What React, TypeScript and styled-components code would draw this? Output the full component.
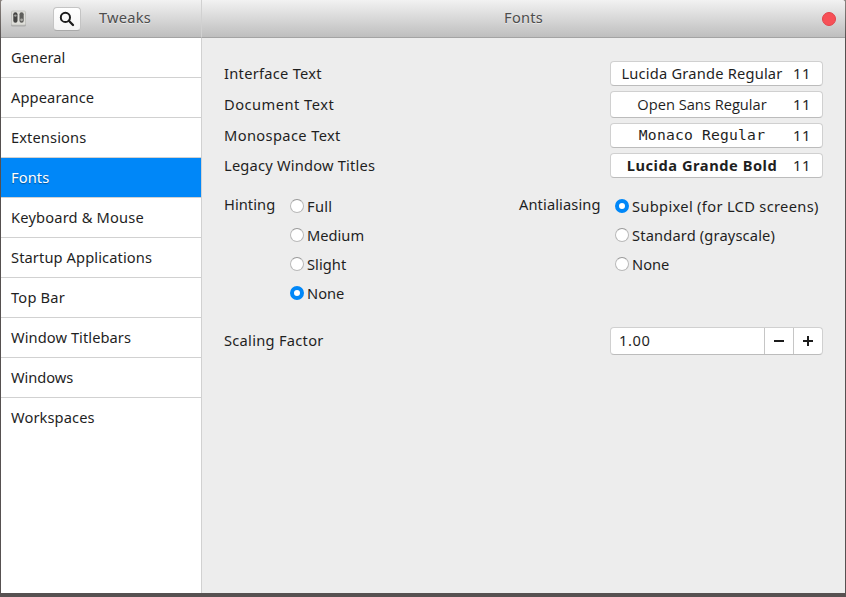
import React from "react";
import styled, { createGlobalStyle } from "styled-components";

const GlobalStyle = createGlobalStyle`
  * { box-sizing: border-box; }
  html, body { margin: 0; height: 100%; overflow: hidden; }
  body { background: #575151; font-family: "Noto Sans", sans-serif; font-size: 14.67px; color: #1f1f1f; }
`;

const Desktop = styled.div`
  width: 846px;
  height: 597px;
  padding: 0 1px 4px 1px;
  background: linear-gradient(#8b8480 0, #55504f 40px, #575151 100%);
`;

const Window = styled.div`
  display: grid;
  grid-template-columns: 201px 1fr;
  grid-template-rows: 38px 1fr;
  height: 593px;
  overflow: hidden;
  background: #ededed;
  border-radius: 3px 3px 0 0;
`;

const headerFill = "linear-gradient(#f2f2f2, #bebebe)";

const SideHeader = styled.header`
  display: flex;
  align-items: center;
  padding-left: 9px;
  background: ${headerFill};
  border-right: 1px solid #d1d1d1;
  border-bottom: 1px solid #a3a3a3;
  color: #4d4d4d;
`;

const MainHeader = styled.header`
  display: grid;
  grid-template-columns: 1fr 15px;
  align-items: center;
  padding: 0 8px 0 23px;
  background: ${headerFill};
  border-bottom: 1px solid #a3a3a3;
  color: #4d4d4d;
  text-align: center;
`;

const Text = styled.span<{ $track?: number }>`
  display: inline-block;
  padding-bottom: 2px;
  line-height: 18px;
  white-space: nowrap;
  letter-spacing: ${(p) => p.$track ?? 0.2}px;
`;

const RadioText = styled(Text)`
  padding: 1px 0;
`;

const HeaderText = styled(Text)`
  margin-top: -2px;
  text-shadow: 0 1px 0 rgba(255, 255, 255, 0.5);
`;

const SearchButton = styled.button`
  display: flex;
  align-items: center;
  justify-content: center;
  width: 28px;
  height: 24px;
  margin: 0 18px 0 26px;
  padding: 0;
  border: 1px solid #c4c4c4;
  border-bottom-color: #aaa;
  border-radius: 4px;
  background: linear-gradient(#fff, #f4f4f4);
`;

const CloseButton = styled.button`
  width: 14px;
  height: 14px;
  margin-top: 1px;
  padding: 0;
  border: 1px solid #e2434b;
  border-radius: 50%;
  background: #f75057;
`;

const Sidebar = styled.nav`
  display: flex;
  flex-direction: column;
  background: #fff;
  border-right: 1px solid #d1d1d1;
`;

const SidebarRow = styled.div<{ $active?: boolean; $last?: boolean }>`
  display: flex;
  align-items: center;
  height: 40px;
  padding-left: 10px;
  border-bottom: 1px solid ${(p) => (p.$last ? "transparent" : "#d1d1d1")};
  background: ${(p) => (p.$active ? "#0087f8" : "#fff")};
  background-clip: padding-box;
  color: ${(p) => (p.$active ? "#fff" : "#1f1f1f")};
  text-shadow: ${(p) => (p.$active ? "0 1px 1px rgba(0, 0, 0, 0.4)" : "none")};
`;

const Content = styled.main`
  padding: 23px 22px 0 22px;
`;

const FontList = styled.div`
  display: flex;
  flex-direction: column;
  gap: 5px;
`;

const SettingRow = styled.div`
  display: flex;
  align-items: center;
  justify-content: space-between;
`;

const FontButton = styled.button<{ $tall?: boolean }>`
  display: grid;
  grid-template-columns: 170px 18px;
  column-gap: 6px;
  align-items: center;
  width: 213px;
  height: ${(p) => (p.$tall ? 27 : 25)}px;
  padding: 0 0 0 6px;
  border: 1px solid #d0d0d0;
  border-bottom-color: #bcbcbc;
  border-radius: 4px;
  background: #fff;
  color: #1f1f1f;
  font: inherit;
`;

const FontName = styled(Text)<{ $family?: string; $bold?: boolean }>`
  font-family: ${(p) => p.$family ?? '"Noto Sans"'}, sans-serif;
  font-weight: ${(p) => (p.$bold ? 700 : 400)};
  text-align: center;
`;

const Options = styled.div`
  display: grid;
  grid-template-columns: 66px 229px 96px 1fr;
  margin-top: 17px;
`;

const RadioList = styled.div`
  display: flex;
  flex-direction: column;
  gap: 9px;
  padding-top: 1px;
`;

const RadioRow = styled.label`
  display: flex;
  align-items: center;
  gap: 3px;
  height: 20px;
`;

const RadioMark = styled.span<{ $on?: boolean }>`
  flex: none;
  width: 14px;
  height: 14px;
  margin-top: -1px;
  border-radius: 50%;
  border: ${(p) => (p.$on ? "4px solid #0087f8" : "1px solid #b9b9b9")};
  border-top-color: ${(p) => (p.$on ? "#0087f8" : "#999")};
  background: #fff;
`;

const ScalingRow = styled(SettingRow)`
  margin-top: 24px;
`;

const SpinBox = styled.div`
  display: grid;
  grid-template-columns: 153px 29px 29px;
  width: 213px;
  height: 28px;
  border: 1px solid #d0d0d0;
  border-bottom-color: #bcbcbc;
  border-radius: 4px;
  background: #fff;
`;

const SpinValue = styled.div`
  display: flex;
  align-items: center;
  padding-left: 8px;
`;

const SpinButton = styled.button`
  display: flex;
  align-items: center;
  justify-content: center;
  padding: 0;
  border: 0;
  border-left: 1px solid #c6c6c6;
  background: none;
`;

const pages: { name: string; track: number }[] = [
  { name: "General", track: 0.05 },
  { name: "Appearance", track: 0.1 },
  { name: "Extensions", track: 0.1 },
  { name: "Fonts", track: 0.1 },
  { name: "Keyboard & Mouse", track: 0.17 },
  { name: "Startup Applications", track: 0.1 },
  { name: "Top Bar", track: 0.2 },
  { name: "Window Titlebars", track: 0.07 },
  { name: "Windows", track: -0.05 },
  { name: "Workspaces", track: 0.1 },
];

const fonts = [
  { label: "Interface Text", track: 0.27, font: "Lucida Grande Regular", fontTrack: 0.2 },
  { label: "Document Text", track: 0.48, font: "Open Sans Regular", fontTrack: 0, family: '"Open Sans"', tall: true },
  { label: "Monospace Text", track: 0.37, font: "Monaco Regular", fontTrack: 0.2, family: '"DejaVu Sans Mono"' },
  { label: "Legacy Window Titles", track: 0.2, font: "Lucida Grande Bold", fontTrack: 0.53, bold: true },
];

const hinting = [
  { name: "Full", track: 0.3 },
  { name: "Medium", track: 0 },
  { name: "Slight", track: 0.05 },
  { name: "None", track: 0 },
];

const antialiasing = [
  { name: "Subpixel (for LCD screens)", track: 0.32 },
  { name: "Standard (grayscale)", track: 0.15 },
  { name: "None", track: 0 },
];

const TweaksIcon = () => (
  <svg width="17" height="17" viewBox="0 0 17 17">
    <rect x="1" y="1.5" width="15" height="15" rx="1.5" fill="#aaa" />
    <rect x="1.5" y="1" width="14" height="14" rx="1.2" fill="#deded9" stroke="#c2c2bc" strokeWidth="0.7" />
    <rect x="3.3" y="2.2" width="4.2" height="10.6" rx="2.1" fill="#454543" />
    <rect x="9.5" y="2.2" width="4.2" height="10.6" rx="2.1" fill="#5e5e5b" />
    <circle cx="5.4" cy="5.6" r="1.2" fill="#a3a39f" />
    <circle cx="11.6" cy="9.8" r="1.4" fill="#a9a9a4" />
  </svg>
);

const SearchIcon = () => (
  <svg width="16" height="16" viewBox="0 0 16 16" fill="none" stroke="#1c1c1c">
    <circle cx="6.4" cy="6.4" r="4.6" strokeWidth="2" />
    <path d="M9.8 9.8L14 14" strokeWidth="2.3" strokeLinecap="round" />
  </svg>
);

type Option = { name: string; track: number };

const RadioGroup = ({ items, selected }: { items: Option[]; selected: string }) => (
  <RadioList>
    {items.map((o) => (
      <RadioRow key={o.name}>
        <RadioMark $on={o.name === selected} />
        <RadioText $track={o.track}>{o.name}</RadioText>
      </RadioRow>
    ))}
  </RadioList>
);

export default function App() {
  return (
    <>
      <GlobalStyle />
      <Desktop>
        <Window>
          <SideHeader>
            <TweaksIcon />
            <SearchButton><SearchIcon /></SearchButton>
            <HeaderText>Tweaks</HeaderText>
          </SideHeader>
          <MainHeader>
            <HeaderText>Fonts</HeaderText>
            <CloseButton />
          </MainHeader>
          <Sidebar>
            {pages.map((p, i) => (
              <SidebarRow key={p.name} $active={p.name === "Fonts"} $last={i === pages.length - 1}>
                <Text $track={p.track}>{p.name}</Text>
              </SidebarRow>
            ))}
          </Sidebar>
          <Content>
            <FontList>
              {fonts.map((f) => (
                <SettingRow key={f.label}>
                  <Text $track={f.track}>{f.label}</Text>
                  <FontButton $tall={f.tall}>
                    <FontName $family={f.family} $bold={f.bold} $track={f.fontTrack}>{f.font}</FontName>
                    <Text $track={0.5}>11</Text>
                  </FontButton>
                </SettingRow>
              ))}
            </FontList>
            <Options>
              <Text $track={0.05}>Hinting</Text>
              <RadioGroup items={hinting} selected="None" />
              <Text $track={0.1}>Antialiasing</Text>
              <RadioGroup items={antialiasing} selected="Subpixel (for LCD screens)" />
            </Options>
            <ScalingRow>
              <Text $track={0.27}>Scaling Factor</Text>
              <SpinBox>
                <SpinValue><Text $track={0.6}>1.00</Text></SpinValue>
                <SpinButton>
                  <svg width="12" height="12" stroke="#1c1c1c" strokeWidth="2"><path d="M1 6H11" /></svg>
                </SpinButton>
                <SpinButton>
                  <svg width="12" height="12" stroke="#1c1c1c" strokeWidth="2"><path d="M1 6H11M6 1V11" /></svg>
                </SpinButton>
              </SpinBox>
            </ScalingRow>
          </Content>
        </Window>
      </Desktop>
    </>
  );
}
